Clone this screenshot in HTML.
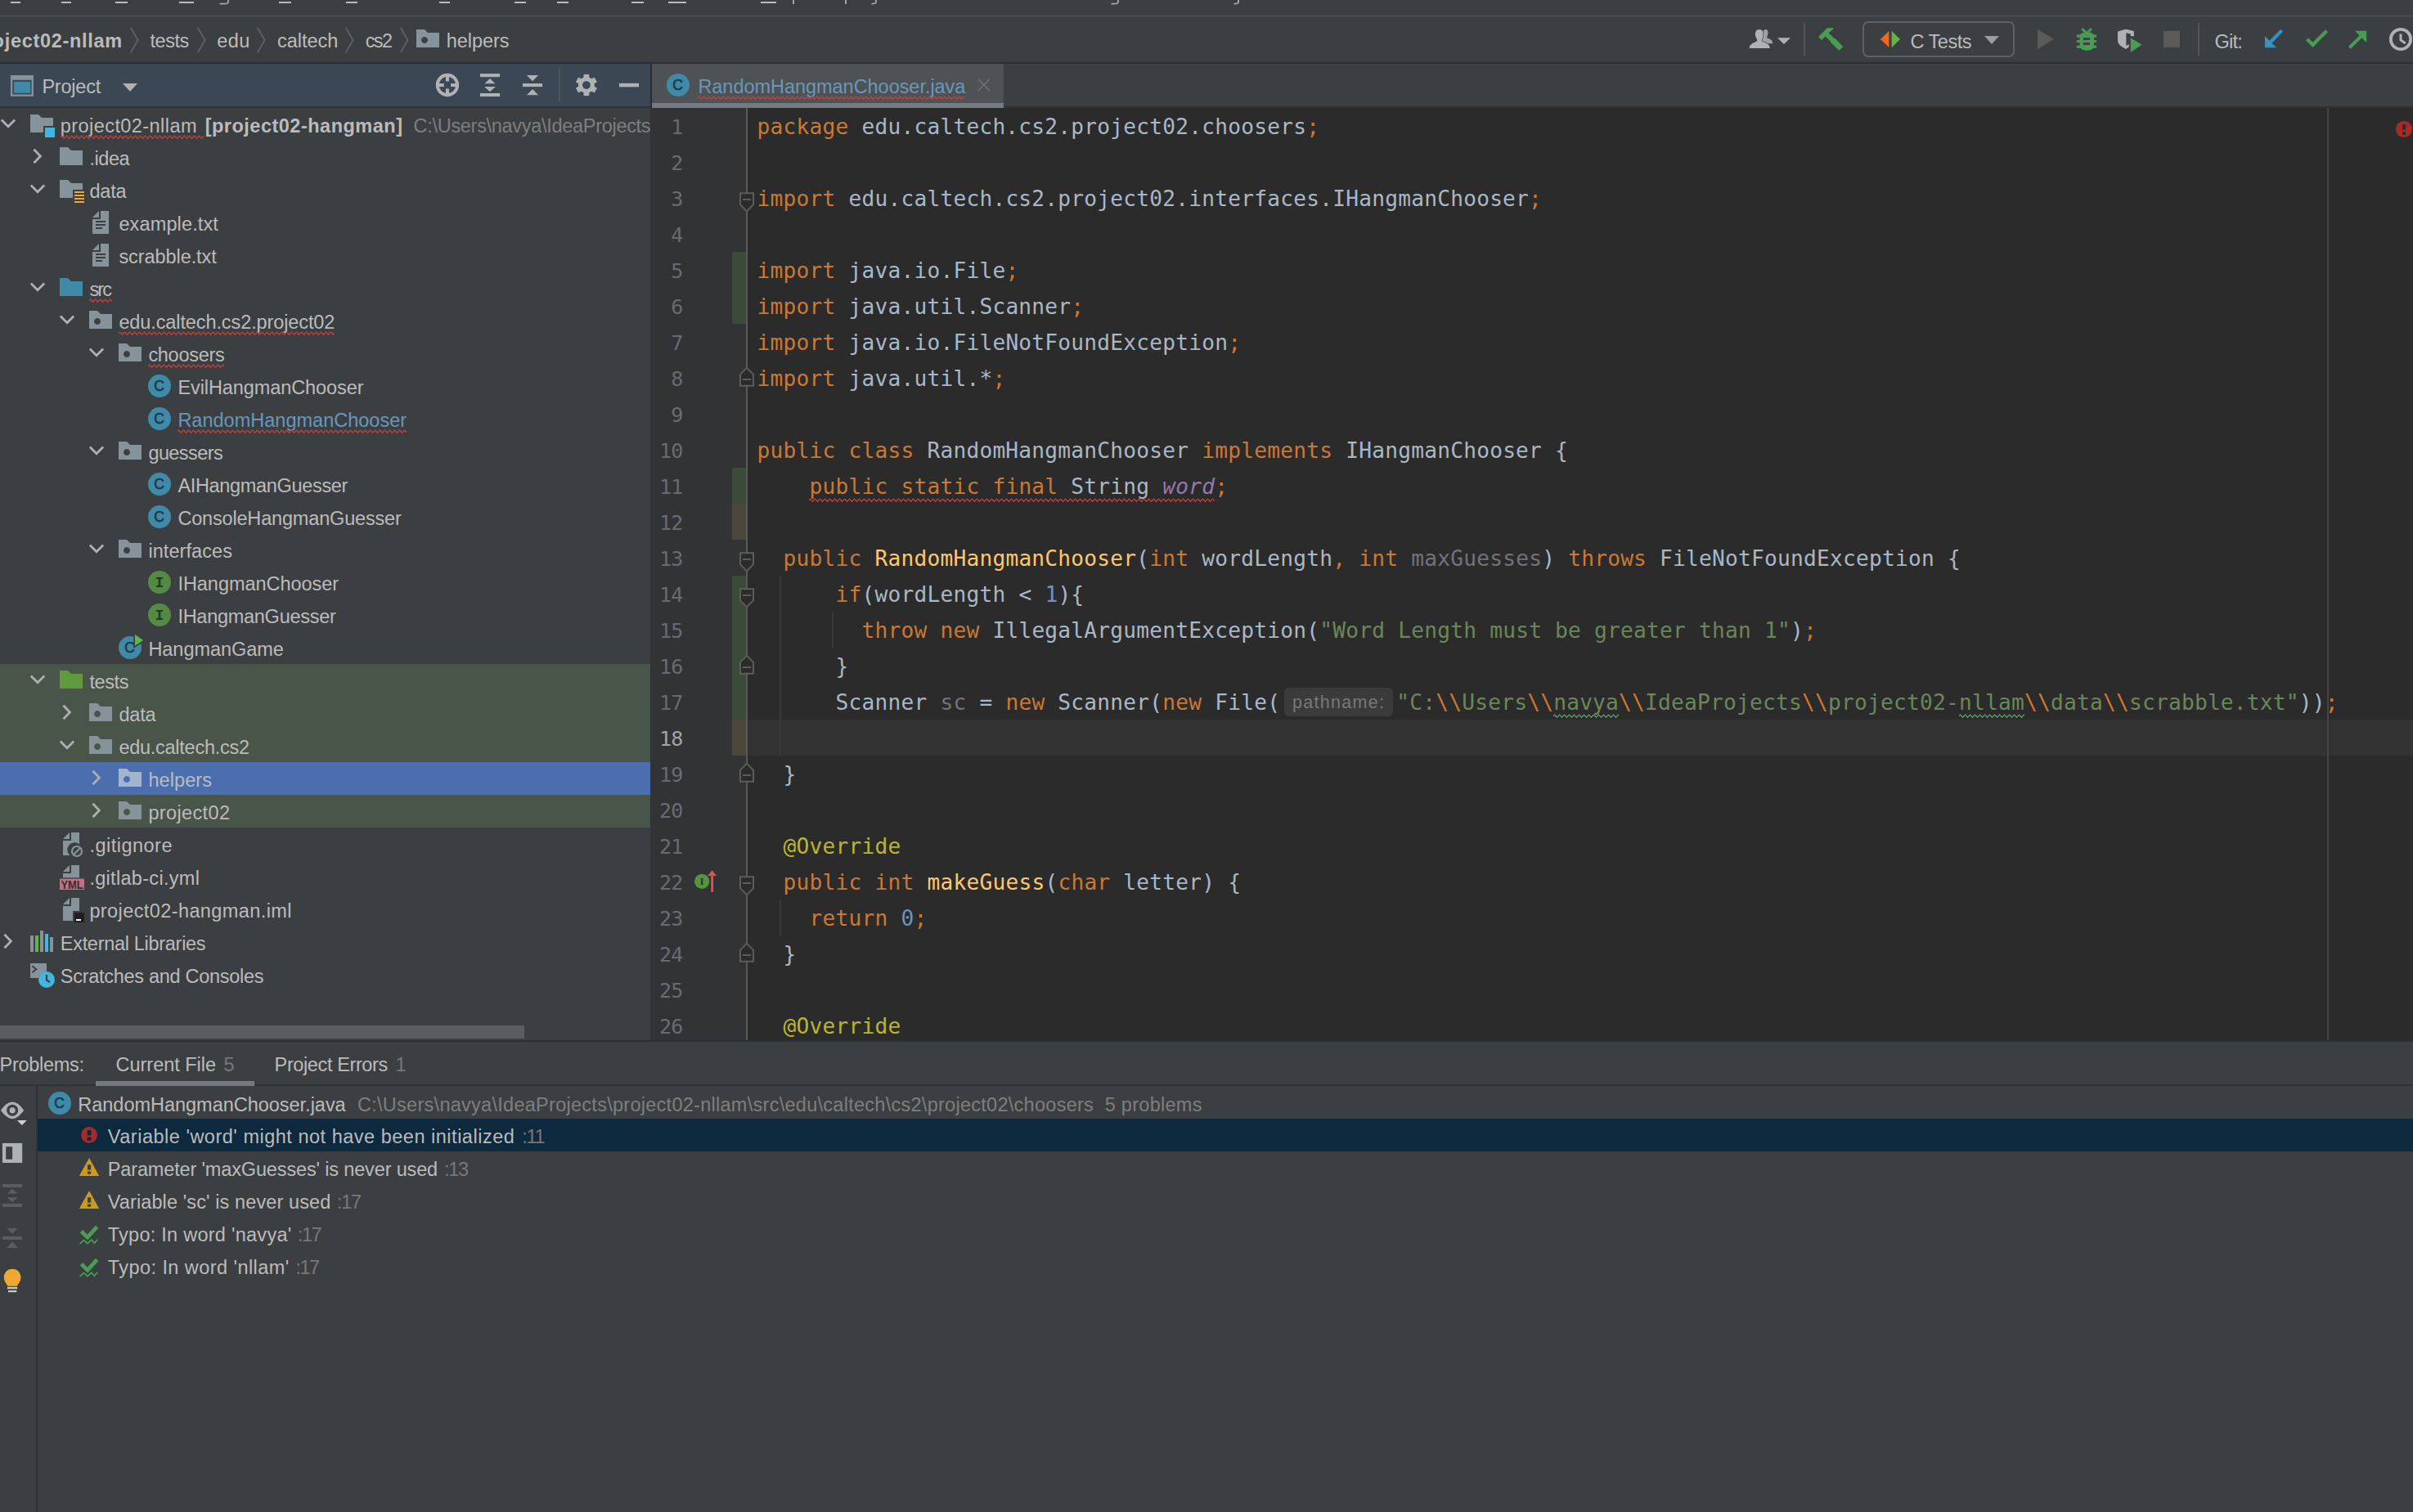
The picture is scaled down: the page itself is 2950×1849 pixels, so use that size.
<!DOCTYPE html><html><head><meta charset="utf-8"><title>project02-hangman</title><style>
html,body{margin:0;padding:0;}
body{width:2950px;height:1849px;overflow:hidden;background:#3c3f41;position:relative;font-family:"Liberation Sans",sans-serif;color:#bbbbbb;}
.a{position:absolute;}
.t{position:absolute;white-space:pre;}
svg{position:absolute;overflow:visible;}
.code{position:absolute;white-space:pre;font-family:"DejaVu Sans Mono","Liberation Mono",monospace;font-size:26.2px;letter-spacing:0.227px;line-height:44px;color:#a9b7c6;}
.k{color:#cc7832}.s{color:#6a8759}.n{color:#6897bb}.an{color:#bbb529}.m{color:#ffc66d}.f{color:#9876aa;font-style:italic}.u{color:#72737a}
.ln{position:absolute;white-space:pre;font-family:"DejaVu Sans Mono","Liberation Mono",monospace;font-size:25px;letter-spacing:-0.75px;line-height:44px;color:#606366;text-align:right;width:60px;left:775px;}
</style></head><body>
<svg width="0" height="0" style="position:absolute"><defs>
<pattern id="wr" width="6" height="6" patternUnits="userSpaceOnUse"><path d="M-1.5 4.3 L1.5 1.1 L4.5 4.3 L7.5 1.1" fill="none" stroke="#c5403c" stroke-width="1.25" stroke-linejoin="miter"/></pattern>
<pattern id="wg" width="6" height="6" patternUnits="userSpaceOnUse"><path d="M-1.5 4.3 L1.5 1.1 L4.5 4.3 L7.5 1.1" fill="none" stroke="#659c6b" stroke-width="1.25" stroke-linejoin="miter"/></pattern>
<symbol id="i-folder" viewBox="0 0 16 16"><polygon fill="#87939a" points="1,2 6,2 8,4 15,4 15,13 1,13"/></symbol>
<symbol id="i-src" viewBox="0 0 16 16"><polygon fill="#3f8aa9" points="1,2 6,2 8,4 15,4 15,13 1,13"/></symbol>
<symbol id="i-test" viewBox="0 0 16 16"><polygon fill="#5f9a3f" points="1,2 6,2 8,4 15,4 15,13 1,13"/></symbol>
<symbol id="i-pkg" viewBox="0 0 16 16"><path fill="#87939a" fill-rule="evenodd" d="M1,2 L6,2 L8,4 L15,4 L15,13 L1,13 Z M6,6.5 a2,2 0 1,0 0.001,0 Z"/></symbol>
<symbol id="i-pkgsel" viewBox="0 0 16 16"><path fill="#a3b4cf" fill-rule="evenodd" d="M1,2 L6,2 L8,4 L15,4 L15,13 L1,13 Z M6,6.5 a2,2 0 1,0 0.001,0 Z"/></symbol>
<symbol id="i-module" viewBox="0 0 16 16"><path fill="#87939a" d="M1,2 L6,2 L8,4 L15,4 L15,9 L9,9 L9,13 L1,13 Z"/><rect x="10" y="10" width="6" height="6" fill="#40b6e0"/></symbol>
<symbol id="i-res" viewBox="0 0 16 16"><path fill="#87939a" d="M1,2 L6,2 L8,4 L15,4 L15,8 L9,8 L9,13 L1,13 Z"/><path fill="#f0a732" d="M10,9h6v1h-6z M10,11h6v1h-6z M10,13h6v1h-6z M10,15h6v1h-6z"/></symbol>
<symbol id="i-text" viewBox="0 0 16 16"><polygon fill="#87939a" points="7,1 3,5 7,5"/><path fill="#87939a" fill-rule="evenodd" d="M8,1 L8,6 L3,6 L3,15 L13,15 L13,1 Z M5,7h6v1h-6z M5,9h6v1h-6z M5,11h4v1h-4z"/></symbol>
<symbol id="i-file" viewBox="0 0 16 16"><polygon fill="#87939a" points="7,1 3,5 7,5"/><path fill="#87939a" d="M8,1 L8,6 L3,6 L3,15 L13,15 L13,1 Z"/></symbol>
</defs></svg>
<div class="a" style="left:0;top:19px;width:2950px;height:1px;background:#555555"></div>
<div class="a" style="left:13px;top:2px;width:12px;height:2px;background:#bbbbbb"></div>
<div class="a" style="left:75px;top:2px;width:12px;height:2px;background:#bbbbbb"></div>
<div class="a" style="left:141px;top:2px;width:15px;height:2px;background:#bbbbbb"></div>
<div class="a" style="left:219px;top:2px;width:18px;height:2px;background:#bbbbbb"></div>
<div class="a" style="left:341px;top:2px;width:15px;height:2px;background:#bbbbbb"></div>
<div class="a" style="left:423px;top:2px;width:14px;height:2px;background:#bbbbbb"></div>
<div class="a" style="left:537px;top:2px;width:13px;height:2px;background:#bbbbbb"></div>
<div class="a" style="left:629px;top:2px;width:14px;height:2px;background:#bbbbbb"></div>
<div class="a" style="left:681px;top:2px;width:14px;height:2px;background:#bbbbbb"></div>
<div class="a" style="left:772px;top:2px;width:15px;height:2px;background:#bbbbbb"></div>
<div class="a" style="left:817px;top:2px;width:22px;height:2px;background:#bbbbbb"></div>
<div class="a" style="left:930px;top:2px;width:19px;height:2px;background:#bbbbbb"></div>
<div class="a" style="left:969px;top:0;width:2px;height:5px;background:#a0a2a3"></div>
<div class="a" style="left:1033px;top:0;width:2px;height:5px;background:#a0a2a3"></div>
<svg class="a" style="left:268px;top:0" width="13" height="7"><path d="M11 0 V2.2 Q11 4.6 6 4.6 H0.5" fill="none" stroke="#a8aaab" stroke-width="1.8"/></svg>
<svg class="a" style="left:1065px;top:0" width="8" height="7"><path d="M6 0 V2.2 Q6 4.6 1 4.6 H0.5" fill="none" stroke="#a8aaab" stroke-width="1.8"/></svg>
<svg class="a" style="left:1358px;top:0" width="11" height="7"><path d="M9 0 V2.2 Q9 4.6 4 4.6 H0.5" fill="none" stroke="#a8aaab" stroke-width="1.8"/></svg>
<svg class="a" style="left:1508px;top:0" width="8" height="7"><path d="M6 0 V2.2 Q6 4.6 1 4.6 H0.5" fill="none" stroke="#a8aaab" stroke-width="1.8"/></svg>
<div class="a" style="left:0;top:76px;width:2950px;height:2px;background:#2d2f30"></div>
<span class="t " style="left:-34.30000000000001px;top:22px;line-height:56px;font-size:23.5px;color:#bbbbbb;letter-spacing:0.700px;font-weight:bold;">project02-nllam</span>
<span class="t " style="left:183.6px;top:22px;line-height:56px;font-size:23.5px;color:#bbbbbb;letter-spacing:-0.507px;">tests</span>
<span class="t " style="left:265.2px;top:22px;line-height:56px;font-size:23.5px;color:#bbbbbb;letter-spacing:0.495px;">edu</span>
<span class="t " style="left:339px;top:22px;line-height:56px;font-size:23.5px;color:#bbbbbb;letter-spacing:-0.043px;">caltech</span>
<span class="t " style="left:446.7px;top:22px;line-height:56px;font-size:23.5px;color:#bbbbbb;letter-spacing:-1.635px;">cs2</span>
<span class="t " style="left:545.8px;top:22px;line-height:56px;font-size:23.5px;color:#bbbbbb;letter-spacing:-0.063px;">helpers</span>
<svg class="a" style="left:158.8px;top:33px" width="12" height="32"><path d="M0.7 0.8 L9.6 16 L0.7 31.2" fill="none" stroke="#5e6366" stroke-width="1.7"/></svg>
<svg class="a" style="left:240.9px;top:33px" width="12" height="32"><path d="M0.7 0.8 L9.6 16 L0.7 31.2" fill="none" stroke="#5e6366" stroke-width="1.7"/></svg>
<svg class="a" style="left:314.3px;top:33px" width="12" height="32"><path d="M0.7 0.8 L9.6 16 L0.7 31.2" fill="none" stroke="#5e6366" stroke-width="1.7"/></svg>
<svg class="a" style="left:422px;top:33px" width="12" height="32"><path d="M0.7 0.8 L9.6 16 L0.7 31.2" fill="none" stroke="#5e6366" stroke-width="1.7"/></svg>
<svg class="a" style="left:488.5px;top:33px" width="12" height="32"><path d="M0.7 0.8 L9.6 16 L0.7 31.2" fill="none" stroke="#5e6366" stroke-width="1.7"/></svg>
<svg class="a" style="left:507px;top:32px" width="32" height="32"><use href="#i-pkg"/></svg>
<div class="a" style="left:0;top:78px;width:795px;height:52px;background:#3b4754"></div>
<div class="a" style="left:0;top:130px;width:795px;height:2px;background:#2f3133"></div>
<div class="a" style="left:795px;top:78px;width:2px;height:54px;background:#2b2d2e"></div>
<div class="a" style="left:795px;top:132px;width:2px;height:1140px;background:#313335"></div>
<svg class="a" style="left:0px;top:20px" width="260" height="115" viewBox="0 0 2413 1067"><rect x="120" y="668" width="260" height="240" fill="#86929b"/><rect x="142" y="722" width="216" height="164" fill="#3b4754"/><rect x="158" y="742" width="187" height="128" fill="#3f8aa9"/></svg>
<span class="t " style="left:51.4px;top:86px;line-height:40px;font-size:23.5px;color:#bbbbbb;letter-spacing:-0.223px;">Project</span>
<svg class="a" style="left:150px;top:102px" width="18" height="10"><polygon points="0,0 18,0 9,10" fill="#afb1b3"/></svg>
<div id="tree" class="a" style="left:0;top:0;width:795px;height:1272px;overflow:hidden">
<svg class="a" style="left:0px;top:144px" width="20" height="14"><path d="M1.8 2.5 L10 10.7 L18.2 2.5" fill="none" stroke="#adafb1" stroke-width="2.8"/></svg>
<svg class="a" style="left:35px;top:136px" width="32" height="32"><use href="#i-module"/></svg>
<span class="t " style="left:73.8px;top:134px;line-height:40px;font-size:23.5px;color:#bbbbbb;letter-spacing:0.432px;">project02-nllam</span>
<svg class="a" style="left:74px;top:165px" width="175" height="6"><rect width="175" height="6" fill="url(#wr)"/></svg>
<span class="t " style="left:250.7px;top:134px;line-height:40px;font-size:23.5px;color:#bbbbbb;letter-spacing:0.493px;font-weight:bold;">[project02-hangman]</span>
<span class="t " style="left:505.6px;top:134px;line-height:40px;font-size:23.5px;color:#7e7e7e;letter-spacing:-0.300px;">C:\Users\navya\IdeaProjects\project02-nllam</span>
<svg class="a" style="left:39px;top:181px" width="14" height="20"><path d="M2.5 1.8 L10.4 10 L2.5 18.2" fill="none" stroke="#adafb1" stroke-width="2.8"/></svg>
<svg class="a" style="left:71px;top:176px" width="32" height="32"><use href="#i-folder"/></svg>
<span class="t " style="left:109.4px;top:174px;line-height:40px;font-size:23.5px;color:#bbbbbb;letter-spacing:-0.415px;">.idea</span>
<svg class="a" style="left:36px;top:224px" width="20" height="14"><path d="M1.8 2.5 L10 10.7 L18.2 2.5" fill="none" stroke="#adafb1" stroke-width="2.8"/></svg>
<svg class="a" style="left:71px;top:216px" width="32" height="32"><use href="#i-res"/></svg>
<span class="t " style="left:109.4px;top:214px;line-height:40px;font-size:23.5px;color:#bbbbbb;letter-spacing:-0.180px;">data</span>
<svg class="a" style="left:107px;top:256px" width="32" height="32"><use href="#i-text"/></svg>
<span class="t " style="left:145.4px;top:254px;line-height:40px;font-size:23.5px;color:#bbbbbb;letter-spacing:0.133px;">example.txt</span>
<svg class="a" style="left:107px;top:296px" width="32" height="32"><use href="#i-text"/></svg>
<span class="t " style="left:145.4px;top:294px;line-height:40px;font-size:23.5px;color:#bbbbbb;letter-spacing:-0.070px;">scrabble.txt</span>
<svg class="a" style="left:36px;top:344px" width="20" height="14"><path d="M1.8 2.5 L10 10.7 L18.2 2.5" fill="none" stroke="#adafb1" stroke-width="2.8"/></svg>
<svg class="a" style="left:71px;top:336px" width="32" height="32"><use href="#i-src"/></svg>
<span class="t " style="left:109.4px;top:334px;line-height:40px;font-size:23.5px;color:#bbbbbb;letter-spacing:-1.812px;">src</span>
<svg class="a" style="left:109px;top:365px" width="28" height="6"><rect width="28" height="6" fill="url(#wr)"/></svg>
<svg class="a" style="left:72px;top:384px" width="20" height="14"><path d="M1.8 2.5 L10 10.7 L18.2 2.5" fill="none" stroke="#adafb1" stroke-width="2.8"/></svg>
<svg class="a" style="left:107px;top:376px" width="32" height="32"><use href="#i-pkg"/></svg>
<span class="t " style="left:145.4px;top:374px;line-height:40px;font-size:23.5px;color:#bbbbbb;letter-spacing:-0.104px;">edu.caltech.cs2.project02</span>
<svg class="a" style="left:145px;top:405px" width="264" height="6"><rect width="264" height="6" fill="url(#wr)"/></svg>
<svg class="a" style="left:108px;top:424px" width="20" height="14"><path d="M1.8 2.5 L10 10.7 L18.2 2.5" fill="none" stroke="#adafb1" stroke-width="2.8"/></svg>
<svg class="a" style="left:143px;top:416px" width="32" height="32"><use href="#i-pkg"/></svg>
<span class="t " style="left:181.4px;top:414px;line-height:40px;font-size:23.5px;color:#bbbbbb;letter-spacing:-0.294px;">choosers</span>
<svg class="a" style="left:181px;top:445px" width="93" height="6"><rect width="93" height="6" fill="url(#wr)"/></svg>
<svg class="a" style="left:179px;top:456px" width="32" height="32"><circle cx="16" cy="16" r="14" fill="#3e8aa8"/><text x="15.6" y="22.2" text-anchor="middle" font-family="Liberation Sans, sans-serif" font-size="17.5" fill="#223a48" stroke="#223a48" stroke-width="0.7">C</text></svg>
<span class="t " style="left:217.4px;top:454px;line-height:40px;font-size:23.5px;color:#bbbbbb;letter-spacing:-0.088px;">EvilHangmanChooser</span>
<svg class="a" style="left:179px;top:496px" width="32" height="32"><circle cx="16" cy="16" r="14" fill="#3e8aa8"/><text x="15.6" y="22.2" text-anchor="middle" font-family="Liberation Sans, sans-serif" font-size="17.5" fill="#223a48" stroke="#223a48" stroke-width="0.7">C</text></svg>
<span class="t " style="left:217.4px;top:494px;line-height:40px;font-size:23.5px;color:#6897bb;letter-spacing:0.008px;">RandomHangmanChooser</span>
<svg class="a" style="left:217px;top:525px" width="280" height="6"><rect width="280" height="6" fill="url(#wr)"/></svg>
<svg class="a" style="left:108px;top:544px" width="20" height="14"><path d="M1.8 2.5 L10 10.7 L18.2 2.5" fill="none" stroke="#adafb1" stroke-width="2.8"/></svg>
<svg class="a" style="left:143px;top:536px" width="32" height="32"><use href="#i-pkg"/></svg>
<span class="t " style="left:181.4px;top:534px;line-height:40px;font-size:23.5px;color:#bbbbbb;letter-spacing:-0.579px;">guessers</span>
<svg class="a" style="left:179px;top:576px" width="32" height="32"><circle cx="16" cy="16" r="14" fill="#3e8aa8"/><text x="15.6" y="22.2" text-anchor="middle" font-family="Liberation Sans, sans-serif" font-size="17.5" fill="#223a48" stroke="#223a48" stroke-width="0.7">C</text></svg>
<span class="t " style="left:217.4px;top:574px;line-height:40px;font-size:23.5px;color:#bbbbbb;letter-spacing:-0.328px;">AIHangmanGuesser</span>
<svg class="a" style="left:179px;top:616px" width="32" height="32"><circle cx="16" cy="16" r="14" fill="#3e8aa8"/><text x="15.6" y="22.2" text-anchor="middle" font-family="Liberation Sans, sans-serif" font-size="17.5" fill="#223a48" stroke="#223a48" stroke-width="0.7">C</text></svg>
<span class="t " style="left:217.4px;top:614px;line-height:40px;font-size:23.5px;color:#bbbbbb;letter-spacing:-0.177px;">ConsoleHangmanGuesser</span>
<svg class="a" style="left:108px;top:664px" width="20" height="14"><path d="M1.8 2.5 L10 10.7 L18.2 2.5" fill="none" stroke="#adafb1" stroke-width="2.8"/></svg>
<svg class="a" style="left:143px;top:656px" width="32" height="32"><use href="#i-pkg"/></svg>
<span class="t " style="left:181.4px;top:654px;line-height:40px;font-size:23.5px;color:#bbbbbb;letter-spacing:0.068px;">interfaces</span>
<svg class="a" style="left:179px;top:696px" width="32" height="32"><circle cx="16" cy="16" r="14" fill="#548a43"/><text x="16" y="22" text-anchor="middle" font-family="Liberation Mono, monospace" font-weight="bold" font-size="18" fill="#263a22">I</text></svg>
<span class="t " style="left:217.4px;top:694px;line-height:40px;font-size:23.5px;color:#bbbbbb;letter-spacing:-0.032px;">IHangmanChooser</span>
<svg class="a" style="left:179px;top:736px" width="32" height="32"><circle cx="16" cy="16" r="14" fill="#548a43"/><text x="16" y="22" text-anchor="middle" font-family="Liberation Mono, monospace" font-weight="bold" font-size="18" fill="#263a22">I</text></svg>
<span class="t " style="left:217.4px;top:734px;line-height:40px;font-size:23.5px;color:#bbbbbb;letter-spacing:-0.274px;">IHangmanGuesser</span>
<svg class="a" style="left:143px;top:776px" width="32" height="32"><circle cx="16" cy="16" r="14" fill="#3e8aa8"/><text x="15.6" y="22.2" text-anchor="middle" font-family="Liberation Sans, sans-serif" font-size="17.5" fill="#223a48" stroke="#223a48" stroke-width="0.7">C</text><polygon points="22,0 32.2,7 22,13.8" fill="#3c3f41" stroke="#3c3f41" stroke-width="3.5"/><polygon points="22,0 32.2,7 22,13.8" fill="#62b543"/></svg>
<span class="t " style="left:181.4px;top:774px;line-height:40px;font-size:23.5px;color:#bbbbbb;letter-spacing:-0.039px;">HangmanGame</span>
<div class="a" style="left:0;top:812px;width:795px;height:40px;background:#4a554a"></div>
<svg class="a" style="left:36px;top:824px" width="20" height="14"><path d="M1.8 2.5 L10 10.7 L18.2 2.5" fill="none" stroke="#adafb1" stroke-width="2.8"/></svg>
<svg class="a" style="left:71px;top:816px" width="32" height="32"><use href="#i-test"/></svg>
<span class="t " style="left:109.4px;top:814px;line-height:40px;font-size:23.5px;color:#bbbbbb;letter-spacing:-0.407px;">tests</span>
<div class="a" style="left:0;top:852px;width:795px;height:40px;background:#4a554a"></div>
<svg class="a" style="left:75px;top:861px" width="14" height="20"><path d="M2.5 1.8 L10.4 10 L2.5 18.2" fill="none" stroke="#adafb1" stroke-width="2.8"/></svg>
<svg class="a" style="left:107px;top:856px" width="32" height="32"><use href="#i-pkg"/></svg>
<span class="t " style="left:145.4px;top:854px;line-height:40px;font-size:23.5px;color:#bbbbbb;letter-spacing:-0.180px;">data</span>
<div class="a" style="left:0;top:892px;width:795px;height:40px;background:#4a554a"></div>
<svg class="a" style="left:72px;top:904px" width="20" height="14"><path d="M1.8 2.5 L10 10.7 L18.2 2.5" fill="none" stroke="#adafb1" stroke-width="2.8"/></svg>
<svg class="a" style="left:107px;top:896px" width="32" height="32"><use href="#i-pkg"/></svg>
<span class="t " style="left:145.4px;top:894px;line-height:40px;font-size:23.5px;color:#bbbbbb;letter-spacing:-0.264px;">edu.caltech.cs2</span>
<div class="a" style="left:0;top:932px;width:795px;height:40px;background:#4b6eaf"></div>
<svg class="a" style="left:111px;top:941px" width="14" height="20"><path d="M2.5 1.8 L10.4 10 L2.5 18.2" fill="none" stroke="#adafb1" stroke-width="2.8"/></svg>
<svg class="a" style="left:143px;top:936px" width="32" height="32"><use href="#i-pkgsel"/></svg>
<span class="t " style="left:181.4px;top:934px;line-height:40px;font-size:23.5px;color:#bbbbbb;letter-spacing:0.087px;">helpers</span>
<div class="a" style="left:0;top:972px;width:795px;height:40px;background:#4a554a"></div>
<svg class="a" style="left:111px;top:981px" width="14" height="20"><path d="M2.5 1.8 L10.4 10 L2.5 18.2" fill="none" stroke="#adafb1" stroke-width="2.8"/></svg>
<svg class="a" style="left:143px;top:976px" width="32" height="32"><use href="#i-pkg"/></svg>
<span class="t " style="left:181.4px;top:974px;line-height:40px;font-size:23.5px;color:#bbbbbb;letter-spacing:0.365px;">project02</span>
<svg class="a" style="left:71px;top:1016px" width="32" height="32" viewBox="0 0 16 16"><polygon fill="#87939a" points="7,1 3,5 7,5"/><path fill="#87939a" d="M8,1 L8,6 L3,6 L3,15 L7.2,15 A4.4,4.4 0 0 1 13,8.2 L13,1 Z"/><circle cx="11.5" cy="12.5" r="3" fill="none" stroke="#87939a" stroke-width="1.1"/><path d="M9.5 14.5 L13.5 10.5" stroke="#87939a" stroke-width="1.1"/></svg>
<span class="t " style="left:109.4px;top:1014px;line-height:40px;font-size:23.5px;color:#bbbbbb;letter-spacing:0.491px;">.gitignore</span>
<svg class="a" style="left:71px;top:1056px" width="32" height="32" viewBox="0 0 16 16"><polygon fill="#87939a" points="7,1 3,5 7,5"/><path fill="#87939a" d="M8,1 L8,6 L3,6 L3,8.6 L13,8.6 L13,1 Z"/><rect x="1" y="9.3" width="15" height="6.7" fill="#c46f80"/><text x="8.5" y="15.3" text-anchor="middle" font-family="Liberation Sans, sans-serif" font-size="7" font-weight="bold" fill="#3a2a30" textLength="13.6" lengthAdjust="spacingAndGlyphs">YML</text></svg>
<span class="t " style="left:109.4px;top:1054px;line-height:40px;font-size:23.5px;color:#bbbbbb;letter-spacing:0.301px;">.gitlab-ci.yml</span>
<svg class="a" style="left:71px;top:1096px" width="32" height="32" viewBox="0 0 16 16"><polygon fill="#87939a" points="7,1 3,5 7,5"/><path fill="#87939a" d="M8,1 L8,6 L3,6 L3,15 L9,15 L9,9 L13,9 L13,1 Z"/><rect x="10" y="10" width="6" height="6" fill="#231f20"/><rect x="11" y="14" width="3" height="1" fill="#ffffff"/></svg>
<span class="t " style="left:109.4px;top:1094px;line-height:40px;font-size:23.5px;color:#bbbbbb;letter-spacing:0.403px;">project02-hangman.iml</span>
<svg class="a" style="left:3px;top:1141px" width="14" height="20"><path d="M2.5 1.8 L10.4 10 L2.5 18.2" fill="none" stroke="#adafb1" stroke-width="2.8"/></svg>
<svg class="a" style="left:35px;top:1136px" width="32" height="32" viewBox="0 0 16 16"><rect x="1" y="4" width="2" height="10" fill="#87939a"/><rect x="4" y="4" width="2" height="10" fill="#62b543"/><rect x="7" y="1" width="2" height="13" fill="#87939a"/><rect x="10" y="3" width="2" height="11" fill="#40b6e0"/><rect x="13" y="5" width="2" height="9" fill="#87939a"/></svg>
<span class="t " style="left:73.8px;top:1134px;line-height:40px;font-size:23.5px;color:#bbbbbb;letter-spacing:-0.298px;">External Libraries</span>
<svg class="a" style="left:35px;top:1176px" width="32" height="32" viewBox="0 0 16 16"><path fill="#87939a" d="M1,1 L11,1 L11,6.2 A5.2,5.2 0 0 0 6.1,10 L1,10 Z"/><path d="M2.2 2.6 L4.6 4.6 L2.2 6.6" fill="none" stroke="#3c3f41" stroke-width="1"/><circle cx="11" cy="11" r="5" fill="#40b6e0"/><path d="M11 8 L11 11.3 L13 12.5" fill="none" stroke="#3c3f41" stroke-width="1.1"/></svg>
<span class="t " style="left:73.8px;top:1174px;line-height:40px;font-size:23.5px;color:#bbbbbb;letter-spacing:-0.283px;">Scratches and Consoles</span>
<div class="a" style="left:0;top:1254px;width:641px;height:16px;background:#5a5c5e"></div>
</div>
<div class="a" style="left:797px;top:78px;width:430px;height:48px;background:#4e5254"></div>
<div class="a" style="left:797px;top:126px;width:430px;height:6px;background:#747a80"></div>
<div class="a" style="left:1227px;top:130px;width:1723px;height:2px;background:#323232"></div>
<svg class="a" style="left:812.5px;top:88.4px" width="32" height="32"><circle cx="16" cy="16" r="14" fill="#3e8aa8"/><text x="15.6" y="22.2" text-anchor="middle" font-family="Liberation Sans, sans-serif" font-size="17.5" fill="#223a48" stroke="#223a48" stroke-width="0.7">C</text></svg>
<span class="t " style="left:853.4px;top:86px;line-height:40px;font-size:23.5px;color:#6897bb;letter-spacing:-0.037px;">RandomHangmanChooser.java</span>
<svg class="a" style="left:853px;top:117px" width="327" height="6"><rect width="327" height="6" fill="url(#wr)"/></svg>
<svg class="a" style="left:1195px;top:96px" width="16" height="16"><path d="M0.8 0.8 L15 15 M15 0.8 L0.8 15" stroke="#6f7274" stroke-width="1.5" fill="none"/></svg>
<div id="editor" class="a" style="left:797px;top:132px;width:2153px;height:1140px;background:#2b2b2b;overflow:hidden">
<div class="a" style="left:0;top:0;width:116px;height:1140px;background:#313335"></div>
<div class="a" style="left:116px;top:748px;width:2100px;height:44px;background:#323232"></div>
<div class="a" style="left:98px;top:176px;width:17px;height:88px;background:#384c38"></div>
<div class="a" style="left:98px;top:440px;width:17px;height:44px;background:#384c38"></div>
<div class="a" style="left:98px;top:484px;width:17px;height:44px;background:#4c4638"></div>
<div class="a" style="left:98px;top:572px;width:17px;height:176px;background:#384c38"></div>
<div class="a" style="left:98px;top:748px;width:17px;height:44px;background:#4c4638"></div>
<div class="a" style="left:115px;top:0;width:2px;height:1140px;background:#5a5a5a"></div>
<div class="a" style="left:2048px;top:0;width:2px;height:1140px;background:#454545"></div>
<div class="a" style="left:156px;top:572px;width:2px;height:220px;background:#393939"></div>
<div class="a" style="left:220px;top:616px;width:2px;height:44px;background:#393939"></div>
<div class="a" style="left:156px;top:968px;width:2px;height:44px;background:#393939"></div>
<div class="ln" style="top:2px;left:-22.5px;color:#686c70">1</div>
<div class="ln" style="top:46px;left:-22.5px;color:#686c70">2</div>
<div class="ln" style="top:90px;left:-22.5px;color:#686c70">3</div>
<div class="ln" style="top:134px;left:-22.5px;color:#686c70">4</div>
<div class="ln" style="top:178px;left:-22.5px;color:#686c70">5</div>
<div class="ln" style="top:222px;left:-22.5px;color:#686c70">6</div>
<div class="ln" style="top:266px;left:-22.5px;color:#686c70">7</div>
<div class="ln" style="top:310px;left:-22.5px;color:#686c70">8</div>
<div class="ln" style="top:354px;left:-22.5px;color:#686c70">9</div>
<div class="ln" style="top:398px;left:-22.5px;color:#686c70">10</div>
<div class="ln" style="top:442px;left:-22.5px;color:#686c70">11</div>
<div class="ln" style="top:486px;left:-22.5px;color:#686c70">12</div>
<div class="ln" style="top:530px;left:-22.5px;color:#686c70">13</div>
<div class="ln" style="top:574px;left:-22.5px;color:#686c70">14</div>
<div class="ln" style="top:618px;left:-22.5px;color:#686c70">15</div>
<div class="ln" style="top:662px;left:-22.5px;color:#686c70">16</div>
<div class="ln" style="top:706px;left:-22.5px;color:#686c70">17</div>
<div class="ln" style="top:750px;left:-22.5px;color:#a4a3a3">18</div>
<div class="ln" style="top:794px;left:-22.5px;color:#686c70">19</div>
<div class="ln" style="top:838px;left:-22.5px;color:#686c70">20</div>
<div class="ln" style="top:882px;left:-22.5px;color:#686c70">21</div>
<div class="ln" style="top:926px;left:-22.5px;color:#686c70">22</div>
<div class="ln" style="top:970px;left:-22.5px;color:#686c70">23</div>
<div class="ln" style="top:1014px;left:-22.5px;color:#686c70">24</div>
<div class="ln" style="top:1058px;left:-22.5px;color:#686c70">25</div>
<div class="ln" style="top:1102px;left:-22.5px;color:#686c70">26</div>
<svg class="a" style="left:106px;top:103px" width="20" height="26"><path d="M2 1.2 H18 V15.2 L10 23.4 L2 15.2 Z" fill="#2b2b2b" stroke="#5c5c5c" stroke-width="2"/><path d="M5 9 H15" stroke="#5c5c5c" stroke-width="2"/></svg>
<svg class="a" style="left:106px;top:315px" width="20" height="26"><path d="M2 24.8 H18 V10.8 L10 2.6 L2 10.8 Z" fill="#2b2b2b" stroke="#5c5c5c" stroke-width="2"/><path d="M5 17 H15" stroke="#5c5c5c" stroke-width="2"/></svg>
<svg class="a" style="left:106px;top:543px" width="20" height="26"><path d="M2 1.2 H18 V15.2 L10 23.4 L2 15.2 Z" fill="#2b2b2b" stroke="#5c5c5c" stroke-width="2"/><path d="M5 9 H15" stroke="#5c5c5c" stroke-width="2"/></svg>
<svg class="a" style="left:106px;top:587px" width="20" height="26"><path d="M2 1.2 H18 V15.2 L10 23.4 L2 15.2 Z" fill="#2b2b2b" stroke="#5c5c5c" stroke-width="2"/><path d="M5 9 H15" stroke="#5c5c5c" stroke-width="2"/></svg>
<svg class="a" style="left:106px;top:667px" width="20" height="26"><path d="M2 24.8 H18 V10.8 L10 2.6 L2 10.8 Z" fill="#2b2b2b" stroke="#5c5c5c" stroke-width="2"/><path d="M5 17 H15" stroke="#5c5c5c" stroke-width="2"/></svg>
<svg class="a" style="left:106px;top:799px" width="20" height="26"><path d="M2 24.8 H18 V10.8 L10 2.6 L2 10.8 Z" fill="#2b2b2b" stroke="#5c5c5c" stroke-width="2"/><path d="M5 17 H15" stroke="#5c5c5c" stroke-width="2"/></svg>
<svg class="a" style="left:106px;top:939px" width="20" height="26"><path d="M2 1.2 H18 V15.2 L10 23.4 L2 15.2 Z" fill="#2b2b2b" stroke="#5c5c5c" stroke-width="2"/><path d="M5 9 H15" stroke="#5c5c5c" stroke-width="2"/></svg>
<svg class="a" style="left:106px;top:1019px" width="20" height="26"><path d="M2 24.8 H18 V10.8 L10 2.6 L2 10.8 Z" fill="#2b2b2b" stroke="#5c5c5c" stroke-width="2"/><path d="M5 17 H15" stroke="#5c5c5c" stroke-width="2"/></svg>
<svg class="a" style="left:3px;top:918px" width="160" height="120" viewBox="0 0 2016 1512"><circle cx="733" cy="350" r="115" fill="#559441"/><text x="733" y="405" text-anchor="middle" font-family="Liberation Serif, serif" font-weight="bold" font-size="168" fill="#263d22">I</text><polygon points="890,178 960,265 820,265" fill="#d9534f"/><rect x="872" y="262" width="36" height="253" fill="#d9534f"/></svg>
<div class="code" style="left:128.5px;top:1px"><span class="k">package</span> edu.caltech.cs2.project02.choosers<span class="k">;</span></div>
<div class="code" style="left:128.5px;top:89px"><span class="k">import</span> edu.caltech.cs2.project02.interfaces.IHangmanChooser<span class="k">;</span></div>
<div class="code" style="left:128.5px;top:177px"><span class="k">import</span> java.io.File<span class="k">;</span></div>
<div class="code" style="left:128.5px;top:221px"><span class="k">import</span> java.util.Scanner<span class="k">;</span></div>
<div class="code" style="left:128.5px;top:265px"><span class="k">import</span> java.io.FileNotFoundException<span class="k">;</span></div>
<div class="code" style="left:128.5px;top:309px"><span class="k">import</span> java.util.*<span class="k">;</span></div>
<div class="code" style="left:128.5px;top:397px"><span class="k">public class</span> RandomHangmanChooser <span class="k">implements</span> IHangmanChooser {</div>
<div class="code" style="left:128.5px;top:441px">    <span class="k">public static final</span> String <span class="f">word</span><span class="k">;</span></div>
<div class="code" style="left:128.5px;top:529px">  <span class="k">public </span><span class="m">RandomHangmanChooser</span>(<span class="k">int</span> wordLength<span class="k">, int </span><span class="u">maxGuesses</span>) <span class="k">throws</span> FileNotFoundException {</div>
<div class="code" style="left:128.5px;top:573px">      <span class="k">if</span>(wordLength &lt; <span class="n">1</span>){</div>
<div class="code" style="left:128.5px;top:617px">        <span class="k">throw new</span> IllegalArgumentException(<span class="s">"Word Length must be greater than 1"</span>)<span class="k">;</span></div>
<div class="code" style="left:128.5px;top:661px">      }</div>
<div class="code" style="left:128.5px;top:793px">  }</div>
<div class="code" style="left:128.5px;top:881px">  <span class="an">@Override</span></div>
<div class="code" style="left:128.5px;top:925px">  <span class="k">public int </span><span class="m">makeGuess</span>(<span class="k">char</span> letter) {</div>
<div class="code" style="left:128.5px;top:969px">    <span class="k">return </span><span class="n">0</span><span class="k">;</span></div>
<div class="code" style="left:128.5px;top:1013px">  }</div>
<div class="code" style="left:128.5px;top:1101px">  <span class="an">@Override</span></div>
<div class="code" style="left:128.5px;top:705px">      Scanner <span class="u">sc</span> = <span class="k">new</span> Scanner(<span class="k">new</span> File(</div>
<div class="a" style="left:773px;top:709px;width:133px;height:35px;background:#3b3b3b;border-radius:6px"></div>
<span class="t " style="left:783px;top:707px;line-height:40px;font-size:21.5px;color:#787878;letter-spacing:1.300px;">pathname:</span>
<div class="code" style="left:910.2px;top:705px"><span class="s">"C:</span><span class="k">\\</span><span class="s">Users</span><span class="k">\\</span><span class="s">navya</span><span class="k">\\</span><span class="s">IdeaProjects</span><span class="k">\\</span><span class="s">project02-nllam</span><span class="k">\\</span><span class="s">data</span><span class="k">\\</span><span class="s">scrabble.txt"</span>))<span class="k">;</span></div>
<svg class="a" style="left:192px;top:477px" width="496" height="6"><rect width="496" height="6" fill="url(#wr)"/></svg>
<svg class="a" style="left:1102.2px;top:741px" width="80" height="6"><rect width="80" height="6" fill="url(#wg)"/></svg>
<svg class="a" style="left:1598.1999999999998px;top:741px" width="80" height="6"><rect width="80" height="6" fill="url(#wg)"/></svg>
<svg class="a" style="left:2132px;top:16px" width="20" height="20"><circle cx="10" cy="10" r="10.1" fill="#a52a2a"/><rect x="8.1" y="4.2" width="3.9" height="6.6" fill="#2b2b2b"/><rect x="8.1" y="13.2" width="3.9" height="3.7" fill="#2b2b2b"/></svg>
</div>
<svg class="a" style="left:520px;top:80px" width="280" height="50" viewBox="0 0 2413 431"><g fill="#afb1b3"><circle cx="232" cy="207" r="105" fill="none" stroke="#afb1b3" stroke-width="34"/><rect x="215" y="100" width="35" height="68"/><rect x="215" y="245" width="35" height="70"/><rect x="125" y="190" width="70" height="35"/><rect x="268" y="190" width="72" height="35"/><rect x="577" y="87" width="208" height="35"/><rect x="577" y="293" width="208" height="35"/><polygon points="680,138 737,192 625,192"/><polygon points="680,278 740,225 622,225"/><rect x="1025" y="190" width="208" height="35"/><polygon points="1068,103 1190,103 1130,165"/><polygon points="1068,312 1190,312 1130,250"/><rect x="1405" y="35" width="16" height="343" fill="#58554f"/><circle cx="1697" cy="207" r="86"/><rect x="1668" y="94" width="58" height="60" transform="rotate(0 1697 207)"/><rect x="1668" y="94" width="58" height="60" transform="rotate(60 1697 207)"/><rect x="1668" y="94" width="58" height="60" transform="rotate(120 1697 207)"/><rect x="1668" y="94" width="58" height="60" transform="rotate(180 1697 207)"/><rect x="1668" y="94" width="58" height="60" transform="rotate(240 1697 207)"/><rect x="1668" y="94" width="58" height="60" transform="rotate(300 1697 207)"/><circle cx="1697" cy="207" r="42" fill="#3b4754"/><rect x="2042" y="188" width="208" height="39"/></g></svg>
<svg class="a" style="left:2130px;top:25px" width="140" height="45" viewBox="0 0 2413 776"><path d="M455,205 C480,178 530,185 542,232 C550,280 532,322 520,345 C515,365 530,375 560,385 C612,402 640,432 640,485 L400,485 L400,300 Z" fill="#afb1b3" opacity="0.85"/><path d="M150,585 C150,520 200,480 290,450 C320,430 320,410 300,380 C270,330 268,290 278,250 C290,210 320,190 360,190 C410,190 442,220 442,270 C442,320 432,360 412,400 C402,430 420,445 452,455 C540,480 580,520 580,585 Z" fill="#afb1b3" stroke="#3c3f41" stroke-width="22" paint-order="stroke"/><polygon points="740,365 1015,365 878,500" fill="#afb1b3"/><rect x="1293" y="55" width="35" height="685" fill="#555555"/><polygon points="1605,345 1790,160 1915,155 1915,185 1820,265 1935,375 1960,385 2125,550 2040,635 1865,465 1860,440 1750,335 1675,415" fill="#499c54"/></svg>
<div class="a" style="left:2277px;top:26px;width:182px;height:40px;border:2px solid #5e6162;border-radius:7px"></div>
<svg class="a" style="left:2299px;top:38px" width="24" height="20"><polygon points="0,10 10.3,0 10.3,20" fill="#f26522"/><polygon points="24,10 13.7,0 13.7,20" fill="#62b543"/></svg>
<span class="t " style="left:2335.5px;top:23px;line-height:56px;font-size:23.5px;color:#bbbbbb;letter-spacing:-0.504px;">C Tests</span>
<svg class="a" style="left:2426px;top:44px" width="18" height="10"><polygon points="0,0 18,0 9,10" fill="#9a9da0"/></svg>
<svg class="a" style="left:2480px;top:25px" width="200" height="45" viewBox="0 0 2413 543"><polygon points="132,130 372,275 132,425" fill="#5a5a5a"/><g fill="#499c54"><polygon points="790,180 930,180 965,215 965,390 930,430 860,447 790,430 755,390 755,215"/><path d="M788,122 L858,190 M928,122 L858,190" stroke="#499c54" stroke-width="36" fill="none"/><rect x="710" y="210" width="293" height="40"/><rect x="710" y="290" width="293" height="36"/><rect x="710" y="370" width="293" height="38"/></g><rect x="808" y="255" width="97" height="35" fill="#3c3f41"/><rect x="808" y="326" width="97" height="35" fill="#3c3f41"/><path d="M1315,165 C1360,150 1400,135 1435,130 C1470,135 1520,150 1555,160 L1555,232 L1505,232 L1505,198 L1440,183 L1440,378 L1480,350 L1480,392 L1435,422 C1380,395 1315,360 1315,290 Z" fill="#afb1b3"/><polygon points="1505,255 1672,360 1505,470" fill="#499c54" stroke="#3c3f41" stroke-width="22" paint-order="stroke"/><rect x="1990" y="155" width="242" height="243" fill="#5a5a5a"/></svg>
<div class="a" style="left:2687px;top:28px;width:2px;height:40px;background:#555555"></div>
<span class="t " style="left:2707.6px;top:23px;line-height:56px;font-size:23.5px;color:#bbbbbb;letter-spacing:-0.786px;">Git:</span>
<svg class="a" style="left:2750px;top:25px" width="200" height="45" viewBox="0 0 2413 543"><g fill="#3592c4"><polygon points="462,130 495,165 330,335 295,300"/><polygon points="228,230 228,400 398,400"/></g><polyline points="850,275 935,360 1140,155" fill="none" stroke="#499c54" stroke-width="52"/><g fill="#499c54"><polygon points="1460,385 1493,420 1665,250 1630,215"/><polygon points="1558,155 1728,155 1728,325"/></g><circle cx="2232" cy="278" r="147" fill="none" stroke="#afb1b3" stroke-width="45"/><polyline points="2232,198 2232,290 2302,337" fill="none" stroke="#afb1b3" stroke-width="36"/></svg>
<div class="a" style="left:0;top:1272px;width:2950px;height:2px;background:#2d2f30"></div>
<span class="t " style="left:-0.5px;top:1274px;line-height:56px;font-size:23.5px;color:#bbbbbb;letter-spacing:-0.286px;">Problems:</span>
<span class="t " style="left:141.6px;top:1274px;line-height:56px;font-size:23.5px;color:#bbbbbb;letter-spacing:-0.032px;">Current File</span>
<span class="t " style="left:273.5px;top:1274px;line-height:56px;font-size:23.5px;color:#787878;">5</span>
<span class="t " style="left:335.6px;top:1274px;line-height:56px;font-size:23.5px;color:#bbbbbb;letter-spacing:-0.388px;">Project Errors</span>
<span class="t " style="left:483.5px;top:1274px;line-height:56px;font-size:23.5px;color:#787878;">1</span>
<div class="a" style="left:0;top:1326px;width:2950px;height:2px;background:#323232"></div>
<div class="a" style="left:117px;top:1322px;width:194px;height:6px;background:#747a80"></div>
<div class="a" style="left:43.5px;top:1328px;width:2px;height:521px;background:#323232"></div>
<div class="a" style="left:46px;top:1368px;width:2904px;height:40px;background:#0d293e"></div>
<svg class="a" style="left:0px;top:1330px" width="140" height="260" viewBox="0 0 814 1512"><path d="M5,162 Q88,42 170,162 Q88,282 5,162 Z" fill="#afb1b3"/><circle cx="88" cy="162" r="41" fill="#3c3f41"/><circle cx="88" cy="162" r="21" fill="#afb1b3"/><polygon points="122,232 190,232 156,268" fill="#cfd0d1"/><rect x="17" y="395" width="141" height="140" fill="#afb1b3"/><rect x="42" y="420" width="46" height="90" fill="#3c3f41"/><g fill="#5a5d5f"><rect x="17" y="686" width="141" height="24"/><rect x="17" y="825" width="141" height="24"/><polygon points="88,720 127,755 50,755"/><polygon points="88,815 127,780 50,780"/><rect x="17" y="1058" width="141" height="24"/><polygon points="48,1000 127,1000 88,1040"/><polygon points="48,1140 127,1140 88,1098"/></g><path d="M88,1290 C125,1290 148,1318 148,1350 C148,1378 130,1392 120,1412 L55,1412 C46,1392 28,1378 28,1350 C28,1318 52,1290 88,1290 Z" fill="#f0a732"/><rect x="52" y="1418" width="71" height="14" fill="#c9cacb"/><rect x="58" y="1442" width="60" height="13" fill="#c9cacb"/><circle cx="634" cy="337" r="58" fill="#a52a2a"/><rect x="620" y="303" width="28" height="37" fill="#0d293e"/><rect x="620" y="352" width="28" height="26" fill="#0d293e"/><polygon points="634,500 705,628 563,628" fill="#cb9a1e"/><rect x="622" y="548" width="24" height="37" fill="#3c3f41"/><rect x="622" y="596" width="24" height="19" fill="#3c3f41"/><polygon points="634,733 705,861 563,861" fill="#cb9a1e"/><rect x="622" y="781" width="24" height="37" fill="#3c3f41"/><rect x="622" y="829" width="24" height="19" fill="#3c3f41"/><polyline points="578,1022 622,1065 690,990" fill="none" stroke="#499c54" stroke-width="28"/><polyline points="568,1110 595,1085 622,1108 650,1083 672,1106 693,1080" fill="none" stroke="#499c54" stroke-width="10"/><polyline points="578,1255 622,1298 690,1223" fill="none" stroke="#499c54" stroke-width="28"/><polyline points="568,1343 595,1318 622,1341 650,1316 672,1339 693,1313" fill="none" stroke="#499c54" stroke-width="10"/></svg>
<svg class="a" style="left:57px;top:1333px" width="32" height="32"><circle cx="16" cy="16" r="14" fill="#3e8aa8"/><text x="15.6" y="22.2" text-anchor="middle" font-family="Liberation Sans, sans-serif" font-size="17.5" fill="#223a48" stroke="#223a48" stroke-width="0.7">C</text></svg>
<span class="t " style="left:95.3px;top:1331px;line-height:40px;font-size:23.5px;color:#bbbbbb;letter-spacing:-0.021px;">RandomHangmanChooser.java</span>
<span class="t " style="left:437px;top:1331px;line-height:40px;font-size:23.5px;color:#7e7e7e;letter-spacing:0.273px;">C:\Users\navya\IdeaProjects\project02-nllam\src\edu\caltech\cs2\project02\choosers  5 problems</span>
<span class="t " style="left:131.8px;top:1370px;line-height:40px;font-size:23.5px;color:#bbbbbb;letter-spacing:0.509px;">Variable 'word' might not have been initialized</span>
<span class="t " style="left:638.2px;top:1370px;line-height:40px;font-size:23.5px;color:#787878;letter-spacing:-1.313px;">:11</span>
<span class="t " style="left:131.8px;top:1410px;line-height:40px;font-size:23.5px;color:#bbbbbb;letter-spacing:-0.150px;">Parameter 'maxGuesses' is never used</span>
<span class="t " style="left:543px;top:1410px;line-height:40px;font-size:23.5px;color:#787878;letter-spacing:-1.335px;">:13</span>
<span class="t " style="left:131.8px;top:1450px;line-height:40px;font-size:23.5px;color:#bbbbbb;letter-spacing:0.104px;">Variable 'sc' is never used</span>
<span class="t " style="left:412px;top:1450px;line-height:40px;font-size:23.5px;color:#787878;letter-spacing:-1.335px;">:17</span>
<span class="t " style="left:131.8px;top:1490px;line-height:40px;font-size:23.5px;color:#bbbbbb;letter-spacing:0.256px;">Typo: In word 'navya'</span>
<span class="t " style="left:364px;top:1490px;line-height:40px;font-size:23.5px;color:#787878;letter-spacing:-1.535px;">:17</span>
<span class="t " style="left:131.8px;top:1530px;line-height:40px;font-size:23.5px;color:#bbbbbb;letter-spacing:0.433px;">Typo: In word 'nllam'</span>
<span class="t " style="left:361.4px;top:1530px;line-height:40px;font-size:23.5px;color:#787878;letter-spacing:-1.535px;">:17</span>
</body></html>
